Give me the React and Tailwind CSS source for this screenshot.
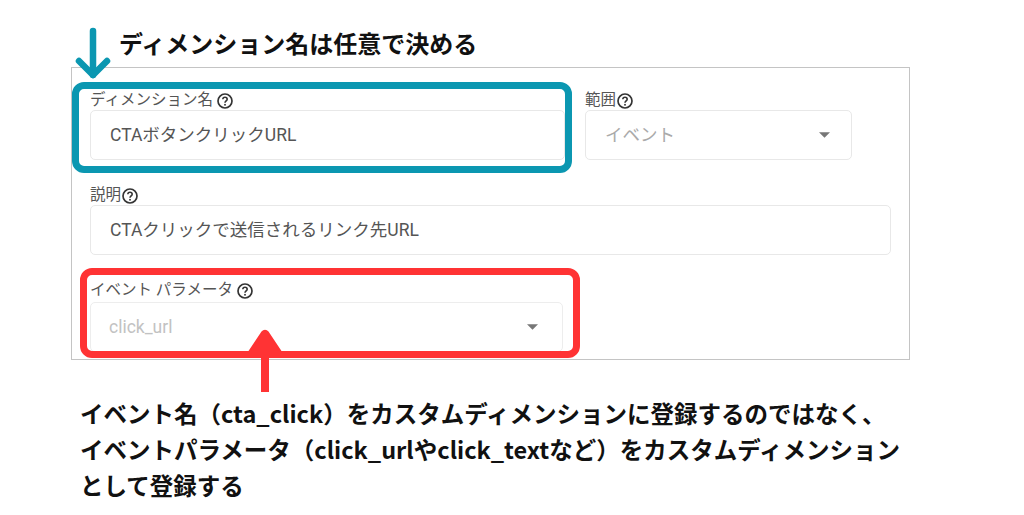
import React from "react";

const UI_FONT = { fontFamily: "Roboto, 'Noto Sans CJK JP', sans-serif" };
const NOTE_FONT = { fontFamily: "'Noto Sans CJK JP', 'Noto Sans', sans-serif" };

function HelpIcon({ className = "" }) {
  return (
    <svg viewBox="0 0 24 24" className={`w-[20px] h-[20px] ${className}`}>
      <circle cx="12" cy="12" r="8.4" fill="none" stroke="#333" strokeWidth="2" />
      <path d="M9.4 10c0-1.5 1.1-2.6 2.6-2.6s2.6 1.1 2.6 2.4c0 2-2.6 2.1-2.6 4.3" fill="none" stroke="#333" strokeWidth="1.9" />
      <rect x="11" y="15.5" width="2" height="2" fill="#333" />
    </svg>
  );
}

function Label({ children, spaced }) {
  return (
    <div className="h-[19px] flex items-center text-[15.5px] text-[#555] leading-none">
      <span>{children}</span>
      <HelpIcon className={spaced ? "ml-[2px]" : "-ml-[1px]"} />
    </div>
  );
}

function Caret() {
  return (
    <svg viewBox="0 0 10 5" className="w-[11px] h-[6px] fill-[#777]">
      <path d="M0 0h10L5 5z" />
    </svg>
  );
}

export default function App() {
  return (
    <div className="w-[1024px] h-[515px] bg-white relative overflow-hidden text-[#111]">
      {/* heading annotation */}
      <h1
        style={NOTE_FONT}
        className="h-[67px] pl-[119px] pt-[27px] text-[24px] font-bold leading-[32px]"
      >
        ディメンション名は任意で決める
      </h1>

      {/* screenshot of the GA form */}
      <div style={UI_FONT} className="ml-[71px] w-[839px] h-[293px] border border-[#c4c4c4] pl-[18px] pt-[23px]">
        <div className="flex gap-[20px]">
          <div className="w-[475px]">
            <Label spaced>ディメンション名</Label>
            <div className="h-[50px] border border-[#e8e8e8] rounded-[5px] px-[19px] flex items-center text-[17.5px] text-[#555]">
              CTAボタンクリックURL
            </div>
          </div>
          <div className="w-[267px]">
            <Label>範囲</Label>
            <div className="h-[50px] border border-[#e8e8e8] rounded-[5px] pl-[19px] pr-[21px] flex items-center justify-between text-[17.5px] text-[#aaa]">
              <span>イベント</span>
              <Caret />
            </div>
          </div>
        </div>

        <div className="mt-[26px] w-[801px]">
          <Label>説明</Label>
          <div className="h-[50px] border border-[#e8e8e8] rounded-[5px] px-[19px] flex items-center text-[17.5px] text-[#555]">
            CTAクリックで送信されるリンク先URL
          </div>
        </div>

        <div className="mt-[26px] w-[473px]">
          <div className="mb-[2px]">
            <Label spaced>イベント パラメータ</Label>
          </div>
          <div className="h-[50px] border border-[#ededed] rounded-[5px] pl-[18px] pr-[24px] flex items-center justify-between text-[17.5px] text-[#c2c2c2]">
            <span>click_url</span>
            <Caret />
          </div>
        </div>
      </div>

      {/* bottom annotation */}
      <p
        style={NOTE_FONT}
        className="mt-[35px] pl-[80px] text-[23.5px] font-bold leading-[36px]"
      >
        イベント名（cta_click）をカスタムディメンションに登録するのではなく、
        <br />
        イベントパラメータ（click_urlやclick_textなど）をカスタムディメンション
        <br />
        として登録する
      </p>

      {/* highlight boxes */}
      <div className="absolute left-[72px] top-[82px] w-[500px] h-[91px] border-[7px] border-[#0b97b1] rounded-[12px]" />
      <div className="absolute left-[80px] top-[268px] w-[500px] h-[90px] border-[7px] border-[#ff3334] rounded-[12px]" />

      {/* arrows */}
      <svg className="absolute left-0 top-0" width="1024" height="515" viewBox="0 0 1024 515">
        <g stroke="#0b97b1" strokeWidth="6.5" strokeLinecap="round" strokeLinejoin="round" fill="none">
          <line x1="93" y1="31" x2="93" y2="75" />
          <polyline points="79,61 93,75 107,61" />
        </g>
        <rect x="261" y="348" width="8" height="44" fill="#ff3334" />
        <path d="M262 332.5 Q265 329 268 332.5 L281 352 L249 352 Z" fill="#ff3334" stroke="#ff3334" strokeWidth="2" strokeLinejoin="round" />
      </svg>
    </div>
  );
}
